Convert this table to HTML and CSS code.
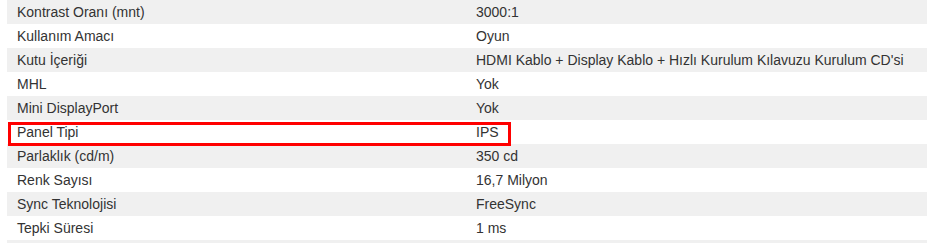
FILE: index.html
```html
<!DOCTYPE html>
<html lang="tr">
<head>
<meta charset="utf-8">
<title>Özellikler</title>
<link rel="stylesheet" href="styles.css">
</head>
<body>
<div class="wrap">
  <table class="specs">
    <tbody>
      <tr><td>Kontrast Oranı (mnt)</td><td>3000:1</td></tr>
      <tr><td>Kullanım Amacı</td><td>Oyun</td></tr>
      <tr><td>Kutu İçeriği</td><td>HDMI Kablo + Display Kablo + Hızlı Kurulum Kılavuzu Kurulum CD's&#105;</td></tr>
      <tr><td>MHL</td><td>Yok</td></tr>
      <tr><td>Mini DisplayPort</td><td>Yok</td></tr>
      <tr><td>Panel Tipi</td><td>IPS</td></tr>
      <tr><td>Parlaklık (cd/m)</td><td>350 cd</td></tr>
      <tr><td>Renk Sayısı</td><td>16,7 Milyon</td></tr>
      <tr><td>Sync Teknolojisi</td><td>FreeSync</td></tr>
      <tr><td>Tepki Süresi</td><td>1 ms</td></tr>
      <tr class="tail"><td></td><td></td></tr>
    </tbody>
  </table>
  <div class="highlight"></div>
</div>
</body>
</html>
```
FILE: styles.css
```css
html, body {
  margin: 0;
  padding: 0;
  background: #fff;
}
body {
  font-family: "Liberation Sans", Arial, sans-serif;
  font-size: 14px;
  color: #333;
}
.wrap {
  position: relative;
  padding-left: 7px;
  width: 920px;
}
.specs {
  width: 920px;
  border-collapse: collapse;
  table-layout: fixed;
}
.specs td {
  height: 24px;
  padding: 0 10px;
  line-height: 24px;
  white-space: nowrap;
  vertical-align: middle;
}
.specs td:first-child {
  width: 439px;
}
.specs tr:nth-child(odd) td {
  background: #f0f0f0;
}
.specs tr.tail td {
  height: 3px;
  line-height: 3px;
}
.highlight {
  position: absolute;
  left: 8px;
  top: 122px;
  width: 497px;
  height: 18px;
  border: 3px solid #f00;
}
```
